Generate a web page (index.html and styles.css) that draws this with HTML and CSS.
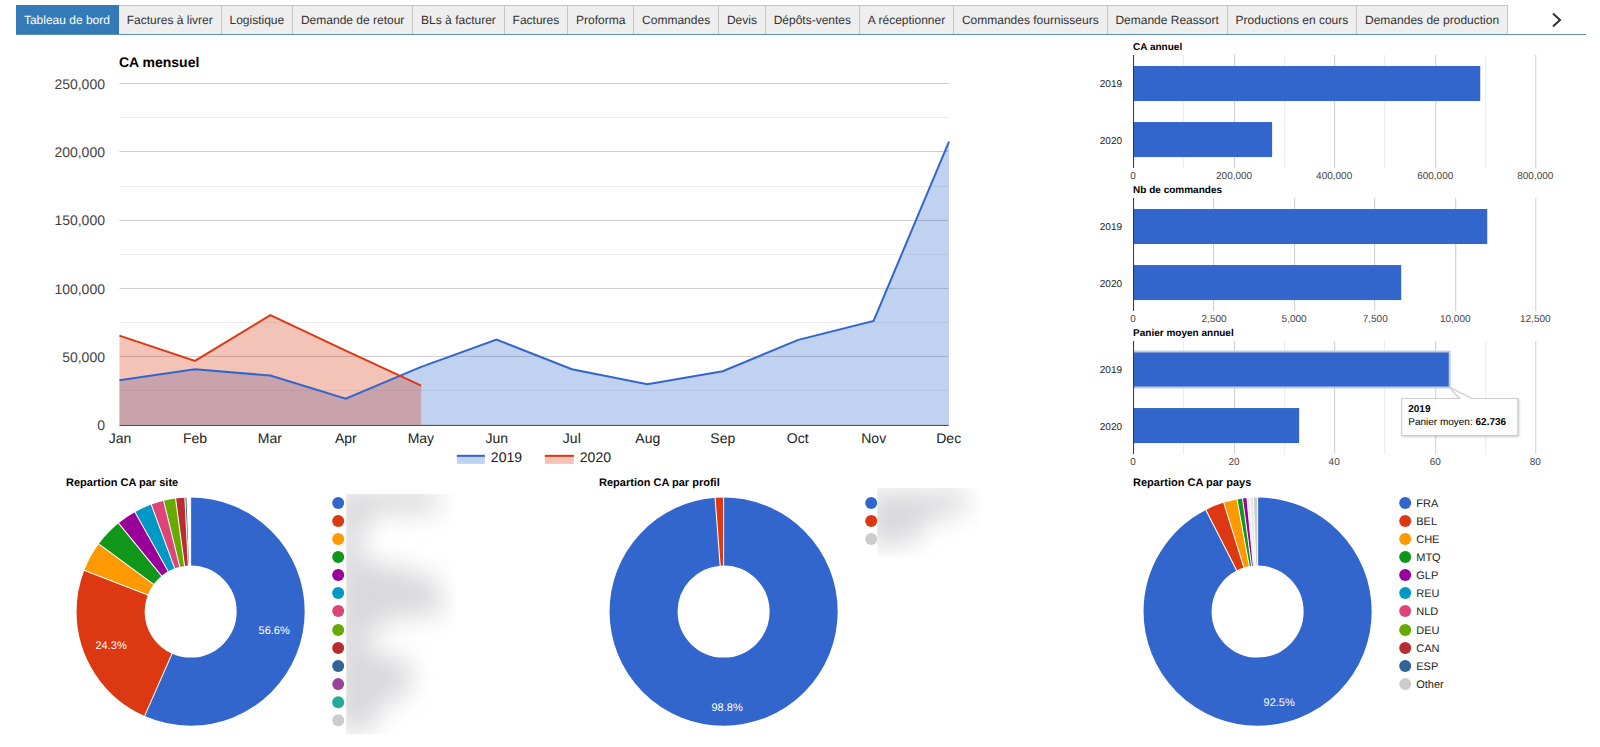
FILE: index.html
```html
<!DOCTYPE html>
<html lang="fr">
<head>
<meta charset="utf-8">
<title>Tableau de bord</title>
<link rel="stylesheet" href="styles.css">
</head>
<body>
<header class="topbar">
  <nav class="tabs" aria-label="Sections">
    <a class="tab tab-active" href="#" aria-current="page">Tableau de bord</a>
    <a class="tab" href="#">Factures à livrer</a>
    <a class="tab" href="#">Logistique</a>
    <a class="tab" href="#">Demande de retour</a>
    <a class="tab" href="#">BLs à facturer</a>
    <a class="tab" href="#">Factures</a>
    <a class="tab" href="#">Proforma</a>
    <a class="tab" href="#">Commandes</a>
    <a class="tab" href="#">Devis</a>
    <a class="tab" href="#">Dépôts-ventes</a>
    <a class="tab" href="#">A réceptionner</a>
    <a class="tab" href="#">Commandes fournisseurs</a>
    <a class="tab" href="#">Demande Reassort</a>
    <a class="tab" href="#">Productions en cours</a>
    <a class="tab" href="#">Demandes de production</a>
  </nav>
  <button class="next" type="button" aria-label="Onglets suivants">
    <svg width="10" height="16" viewBox="0 0 10 16"><path d="M1 1.5 8 8 1 14.5" fill="none" stroke="#333" stroke-width="2"/></svg>
  </button>
</header>
<main class="board">
  <section class="monthly">
    <svg class="chart" viewBox="0 0 1067 429" role="img" aria-label="CA mensuel">
      <text class="t14 bold" x="119" y="27">CA mensuel</text>
      <path class="minor" d="M119.500 77.500H949M119.500 146.500H949M119.500 214.500H949M119.500 282.500H949M119.500 350.500H949"/>
      <path class="major" d="M119.500 43.500H949M119.500 111.500H949M119.500 180.500H949M119.500 248.500H949M119.500 316.500H949"/>
      <path class="area blue" d="M119.500 385V340.300L195 329.300 270.400 335.700 345.800 358.700 421.300 327 496.700 299.700 572.100 329.300 647.600 344.300 723 331.300 798.500 300 873.900 281 949.300 101.700V385Z"/>
      <path class="area red" d="M119.500 385V295.700L195 321 270.400 275.300 345.800 310.700 421.300 345.700V385Z"/>
      <path class="axis" d="M119.500 385.500H949"/>
      <path class="line blue-line" d="M119.500 340.300L195 329.300 270.400 335.700 345.800 358.700 421.300 327 496.700 299.700 572.100 329.300 647.600 344.300 723 331.300 798.500 300 873.900 281 949.300 101.700"/>
      <path class="line red-line" d="M119.500 295.700L195 321 270.400 275.300 345.800 310.700 421.300 345.700"/>
      <g class="t14 gray end">
        <text x="105" y="49">250,000</text><text x="105" y="117">200,000</text><text x="105" y="185">150,000</text>
        <text x="105" y="254">100,000</text><text x="105" y="322">50,000</text><text x="105" y="390">0</text>
      </g>
      <g class="t14 dark mid">
        <text x="120" y="403">Jan</text><text x="195" y="403">Feb</text><text x="270" y="403">Mar</text><text x="346" y="403">Apr</text>
        <text x="421" y="403">May</text><text x="497" y="403">Jun</text><text x="572" y="403">Jul</text><text x="648" y="403">Aug</text>
        <text x="723" y="403">Sep</text><text x="798" y="403">Oct</text><text x="874" y="403">Nov</text><text x="949" y="403">Dec</text>
      </g>
      <rect class="area blue" x="457" y="415" width="28" height="9"/><path class="line blue-line" d="M457 416H485"/>
      <rect class="area red" x="545" y="415" width="29" height="9"/><path class="line red-line" d="M545 416H574"/>
      <text class="t14 dark" x="491" y="422">2019</text><text class="t14 dark" x="580" y="422">2020</text>
    </svg>
  </section>
  <section class="yearly">
    <svg class="chart" viewBox="0 0 533 143" role="img" aria-label="CA annuel">
      <text class="t10 bold" x="66" y="10">CA annuel</text>
      <path class="minor" d="M116.500 15V128M217.500 15V128M317.500 15V128M418.500 15V128"/>
      <path class="major" d="M167.500 15V128M267.500 15V128M368.500 15V128M468.500 15V128"/>
      <rect class="bar" x="66" y="26" width="347" height="35"/><rect class="bar" x="66" y="82" width="139" height="35"/>
      <path class="axis" d="M66.500 15V128"/>
      <g class="t10 dark end"><text x="55" y="47">2019</text><text x="55" y="104">2020</text></g>
      <g class="t10 gray mid"><text x="66" y="139">0</text><text x="167" y="139">200,000</text><text x="267" y="139">400,000</text><text x="368" y="139">600,000</text><text x="468" y="139">800,000</text></g>
    </svg>
    <svg class="chart" viewBox="0 0 533 143" role="img" aria-label="Nb de commandes">
      <text class="t10 bold" x="66" y="10">Nb de commandes</text>
      <path class="major" d="M146.500 15V128M227.500 15V128M307.500 15V128M388.500 15V128M468.500 15V128"/>
      <rect class="bar" x="66" y="26" width="354" height="35"/><rect class="bar" x="66" y="82" width="268" height="35"/>
      <path class="axis" d="M66.500 15V128"/>
      <g class="t10 dark end"><text x="55" y="47">2019</text><text x="55" y="104">2020</text></g>
      <g class="t10 gray mid"><text x="66" y="139">0</text><text x="147" y="139">2,500</text><text x="227" y="139">5,000</text><text x="308" y="139">7,500</text><text x="388" y="139">10,000</text><text x="468" y="139">12,500</text></g>
    </svg>
    <svg class="chart" viewBox="0 0 533 143" role="img" aria-label="Panier moyen annuel">
      <text class="t10 bold" x="66" y="10">Panier moyen annuel</text>
      <path class="minor" d="M116.500 15V128M217.500 15V128M317.500 15V128M418.500 15V128"/>
      <path class="major" d="M167.500 15V128M267.500 15V128M368.500 15V128M468.500 15V128"/>
      <rect class="bar" x="66" y="26" width="316" height="35"/><rect class="bar" x="66" y="82" width="166" height="35"/>
      <path class="hover-ring" d="M66 25.500H382.500V61.500H66"/>
      <path class="axis" d="M66.500 15V128"/>
      <g class="t10 dark end"><text x="55" y="47">2019</text><text x="55" y="104">2020</text></g>
      <g class="t10 gray mid"><text x="66" y="139">0</text><text x="167" y="139">20</text><text x="267" y="139">40</text><text x="368" y="139">60</text><text x="468" y="139">80</text></g>
      <path class="tip" d="M334.500 72.500H392.500L382.500 61.500 404.500 72.500H450.500V109.500H334.500Z"/>
      <text class="t10 bold" x="341" y="86">2019</text>
      <text class="t10" x="341" y="99">Panier moyen: <tspan class="bold">62.736</tspan></text>
    </svg>
  </section>
  <section class="share">
    <svg class="chart" viewBox="0 0 533 270" role="img" aria-label="Repartion CA par site">
      <defs>
        <filter id="soft" x="-50%" y="-50%" width="200%" height="200%"><feGaussianBlur stdDeviation="13"/></filter>
        <clipPath id="mask-site"><rect x="346" y="25" width="109" height="240"/></clipPath>
      </defs>
      <text class="t11 bold" x="66" y="17">Repartion CA par site</text>
      <g class="ring" transform="translate(190.500 142.500) rotate(-90)">
        <circle r="80" pathLength="100" stroke="#3366cc" stroke-dasharray="56.6 100"/>
        <circle r="80" pathLength="100" stroke="#dc3912" stroke-dasharray="24.3 100" stroke-dashoffset="-56.6"/>
        <circle r="80" pathLength="100" stroke="#ff9900" stroke-dasharray="4.2 100" stroke-dashoffset="-80.9"/>
        <circle r="80" pathLength="100" stroke="#109618" stroke-dasharray="4 100" stroke-dashoffset="-85.1"/>
        <circle r="80" pathLength="100" stroke="#990099" stroke-dasharray="2.8 100" stroke-dashoffset="-89.1"/>
        <circle r="80" pathLength="100" stroke="#0099c6" stroke-dasharray="2.5 100" stroke-dashoffset="-91.9"/>
        <circle r="80" pathLength="100" stroke="#dd4477" stroke-dasharray="1.8 100" stroke-dashoffset="-94.4"/>
        <circle r="80" pathLength="100" stroke="#66aa00" stroke-dasharray="1.700 100" stroke-dashoffset="-96.2"/>
        <circle r="80" pathLength="100" stroke="#b82e2e" stroke-dasharray="1.300 100" stroke-dashoffset="-97.9"/>
        <circle r="80" pathLength="100" stroke="#316395" stroke-dasharray=".2 100" stroke-dashoffset="-99.2"/>
        <g class="cut">
          <path d="M45 0H115"/><path d="M45 0H115" transform="rotate(203.8)"/><path d="M45 0H115" transform="rotate(291.2)"/>
          <path d="M45 0H115" transform="rotate(306.4)"/><path d="M45 0H115" transform="rotate(320.8)"/><path d="M45 0H115" transform="rotate(330.8)"/>
          <path d="M45 0H115" transform="rotate(339.8)"/><path d="M45 0H115" transform="rotate(346.3)"/><path d="M45 0H115" transform="rotate(352.4)"/>
          <path d="M45 0H115" transform="rotate(357.1)"/>
        </g>
      </g>
      <g class="t11 white mid"><text x="274" y="165">56.6%</text><text x="111" y="180">24.3%</text></g>
      <g>
        <circle cx="338" cy="34" r="6" fill="#3366cc"/><circle cx="338" cy="52" r="6" fill="#dc3912"/><circle cx="338" cy="70" r="6" fill="#ff9900"/>
        <circle cx="338" cy="88" r="6" fill="#109618"/><circle cx="338" cy="106" r="6" fill="#990099"/><circle cx="338" cy="124" r="6" fill="#0099c6"/>
        <circle cx="338" cy="142" r="6" fill="#dd4477"/><circle cx="338" cy="161" r="6" fill="#66aa00"/><circle cx="338" cy="179" r="6" fill="#b82e2e"/>
        <circle cx="338" cy="197" r="6" fill="#316395"/><circle cx="338" cy="215" r="6" fill="#994499"/><circle cx="338" cy="233" r="6" fill="#22aa99"/>
        <circle cx="338" cy="251" r="6" fill="#cccccc"/>
      </g>
      <g clip-path="url(#mask-site)"><path class="haze" filter="url(#soft)" d="M336 20H438V44H376L362 62V92L388 96 434 108 446 144 390 150 368 166 372 184 412 192 408 226 380 236 372 262H336Z"/></g>
    </svg>
  </section>
  <section class="share">
    <svg class="chart" viewBox="0 0 533 270" role="img" aria-label="Repartion CA par profil">
      <defs><clipPath id="mask-profil"><rect x="344" y="19" width="104" height="69"/></clipPath></defs>
      <text class="t11 bold" x="66" y="17">Repartion CA par profil</text>
      <g class="ring" transform="translate(190.500 142.500) rotate(-90)">
        <circle r="80" pathLength="100" stroke="#3366cc" stroke-dasharray="98.8 100"/>
        <circle r="80" pathLength="100" stroke="#dc3912" stroke-dasharray="1.2 100" stroke-dashoffset="-98.8"/>
        <g class="cut"><path d="M45 0H115"/><path d="M45 0H115" transform="rotate(355.7)"/></g>
      </g>
      <g class="t11 white mid"><text x="194" y="242">98.8%</text></g>
      <circle cx="338" cy="34" r="6" fill="#3366cc"/><circle cx="338" cy="52" r="6" fill="#dc3912"/><circle cx="338" cy="70" r="6" fill="#cccccc"/>
      <g clip-path="url(#mask-profil)"><path class="haze" filter="url(#soft)" d="M334 22H434V42L396 50 380 74 334 78Z"/></g>
    </svg>
  </section>
  <section class="share">
    <svg class="chart" viewBox="0 0 533 270" role="img" aria-label="Repartion CA par pays">
      <text class="t11 bold" x="66" y="17">Repartion CA par pays</text>
      <g class="ring" transform="translate(190.500 142.500) rotate(-90)">
        <circle r="80" pathLength="100" stroke="#3366cc" stroke-dasharray="92.5 100"/>
        <circle r="80" pathLength="100" stroke="#dc3912" stroke-dasharray="2.7 100" stroke-dashoffset="-92.5"/>
        <circle r="80" pathLength="100" stroke="#ff9900" stroke-dasharray="1.9 100" stroke-dashoffset="-95.2"/>
        <circle r="80" pathLength="100" stroke="#109618" stroke-dasharray=".8 100" stroke-dashoffset="-97.1"/>
        <circle r="80" pathLength="100" stroke="#990099" stroke-dasharray=".6 100" stroke-dashoffset="-97.9"/>
        <circle r="80" pathLength="100" stroke="#e6e6e6" stroke-dasharray=".9 100" stroke-dashoffset="-98.5"/>
        <circle r="80" pathLength="100" stroke="#cccccc" stroke-dasharray=".6 100" stroke-dashoffset="-99.4"/>
        <g class="cut">
          <path d="M45 0H115"/><path d="M45 0H115" transform="rotate(333)"/><path d="M45 0H115" transform="rotate(342.7)"/>
          <path d="M45 0H115" transform="rotate(349.6)"/><path d="M45 0H115" transform="rotate(352.4)"/><path d="M45 0H115" transform="rotate(354.6)"/>
          <path d="M45 0H115" transform="rotate(356)"/><path d="M45 0H115" transform="rotate(357.8)"/>
        </g>
      </g>
      <g class="t11 white mid"><text x="212" y="237">92.5%</text></g>
      <g>
        <circle cx="338" cy="34" r="6" fill="#3366cc"/><circle cx="338" cy="52" r="6" fill="#dc3912"/><circle cx="338" cy="70" r="6" fill="#ff9900"/>
        <circle cx="338" cy="88" r="6" fill="#109618"/><circle cx="338" cy="106" r="6" fill="#990099"/><circle cx="338" cy="124" r="6" fill="#0099c6"/>
        <circle cx="338" cy="142" r="6" fill="#dd4477"/><circle cx="338" cy="161" r="6" fill="#66aa00"/><circle cx="338" cy="179" r="6" fill="#b82e2e"/>
        <circle cx="338" cy="197" r="6" fill="#316395"/><circle cx="338" cy="215" r="6" fill="#cccccc"/>
      </g>
      <g class="t11 dark">
        <text x="349" y="38">FRA</text><text x="349" y="56">BEL</text><text x="349" y="74">CHE</text><text x="349" y="92">MTQ</text>
        <text x="349" y="110">GLP</text><text x="349" y="128">REU</text><text x="349" y="146">NLD</text><text x="349" y="165">DEU</text>
        <text x="349" y="183">CAN</text><text x="349" y="201">ESP</text><text x="349" y="219">Other</text>
      </g>
    </svg>
  </section>
</main>
</body>
</html>
```
FILE: styles.css
```css
* { box-sizing: border-box; }
body {
  margin: 0;
  background: #fff;
  color: #333;
  font-family: "Liberation Sans", Arial, Helvetica, sans-serif;
  text-rendering: geometricPrecision;
}
.topbar {
  display: flex;
  margin: 5px 14px 5px 16px;
  border-bottom: 1px solid #5b8fbc;
}
.tabs { display: flex; flex: 1; margin-right: 20px; }
.tab {
  flex: 1 1 auto;
  padding: 0 7px;
  border: solid #c5c5c5;
  border-width: 1px 1px 0 0;
  background: #eee;
  color: #333;
  font-size: 12px;
  line-height: 28px;
  text-align: center;
  text-decoration: none;
  white-space: nowrap;
}
.tab-active { background: #337ab7; border-color: #337ab7; color: #fff; }
.next {
  display: flex;
  align-items: center;
  justify-content: center;
  width: 58px;
  padding: 0;
  border: 0;
  background: none;
  cursor: pointer;
}
.board { display: grid; grid-template-columns: repeat(3, minmax(0, 1fr)); }
.monthly { grid-column: span 2; }
.chart { display: block; width: 100%; height: auto; }
.t10 { font-size: 10px; }
.t11 { font-size: 11px; }
.t14 { font-size: 14px; }
.bold { font-weight: bold; }
.chart text { fill: #000; }
.chart .gray text { fill: #444; }
.chart .dark text, .chart text.dark { fill: #222; }
.chart .white text { fill: #fff; }
.end { text-anchor: end; }
.mid { text-anchor: middle; }
.minor, .major, .axis, .line, .ring, .hover-ring { fill: none; }
.minor { stroke: #ebebeb; }
.major { stroke: #ccc; }
.axis { stroke: #333; }
.line { stroke-width: 2; }
.blue-line { stroke: #3366cc; }
.red-line { stroke: #dc3912; }
.area { fill-opacity: .3; }
.blue, .bar { fill: #3366cc; }
.red { fill: #dc3912; }
.hover-ring { stroke: #c3cbdc; stroke-width: 2; }
.ring circle { stroke-width: 68; }
.cut { stroke: #fff; }
.tip { fill: #fff; stroke: #ccc; filter: drop-shadow(1px 1px 1px rgba(0, 0, 0, .2)); }
.haze { fill: #d9d9db; }
```
